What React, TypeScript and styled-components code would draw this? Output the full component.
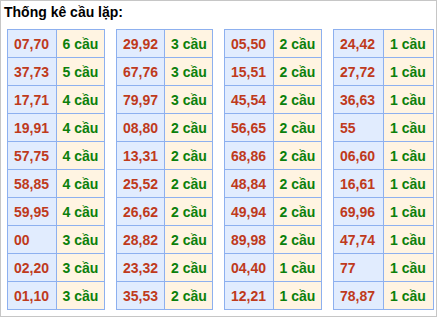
import React from 'react';
import styled, { createGlobalStyle } from 'styled-components';

const GlobalStyle = createGlobalStyle`
  html, body {
    margin: 0;
    padding: 0;
    background: #ffffff;
  }
  body {
    font-family: "Liberation Sans", Arial, sans-serif;
  }
`;

// [number pair, count] for each table column
const TABLES: [string, number][][] = [
  [['07,70', 6], ['37,73', 5], ['17,71', 4], ['19,91', 4], ['57,75', 4], ['58,85', 4], ['59,95', 4], ['00', 3], ['02,20', 3], ['01,10', 3]],
  [['29,92', 3], ['67,76', 3], ['79,97', 3], ['08,80', 2], ['13,31', 2], ['25,52', 2], ['26,62', 2], ['28,82', 2], ['23,32', 2], ['35,53', 2]],
  [['05,50', 2], ['15,51', 2], ['45,54', 2], ['56,65', 2], ['68,86', 2], ['48,84', 2], ['49,94', 2], ['89,98', 2], ['04,40', 1], ['12,21', 1]],
  [['24,42', 1], ['27,72', 1], ['36,63', 1], ['55', 1], ['06,60', 1], ['16,61', 1], ['69,96', 1], ['47,74', 1], ['77', 1], ['78,87', 1]],
];

const TABLE_WIDTHS = [98, 97, 98, 101];

const Frame = styled.div`
  box-sizing: border-box;
  width: 437px;
  height: 317px;
  border: 1px solid #c6c6c6;
  padding: 0 2px 0 6px;
`;

const Title = styled.div`
  font-size: 14px;
  font-weight: bold;
  color: #000;
  line-height: 17px;
  padding-top: 3px;
  margin-left: -3px;
  height: 25px;
`;

const TablesRow = styled.div`
  display: flex;
  gap: 11px;
`;

const Table = styled.div<{ $width: number }>`
  width: ${p => p.$width}px;
  box-sizing: border-box;
  display: grid;
  grid-template-columns: 1fr 1fr;
  grid-auto-rows: 27px;
  gap: 1px;
  padding: 1px;
  background: #8db0ef;
`;

const Cell = styled.div<{ $kind: 'num' | 'count' }>`
  background: ${p => (p.$kind === 'num' ? '#e1ecfe' : '#fff4e2')};
  color: ${p => (p.$kind === 'num' ? '#bf3a1c' : '#0b800b')};
  font-size: 14px;
  font-weight: bold;
  display: flex;
  align-items: center;
  padding-left: ${p => (p.$kind === 'num' ? 6 : 6)}px;
`;

export default function App() {
  return (
    <>
      <GlobalStyle />
      <Frame>
        <Title>Thống kê cầu lặp:</Title>
        <TablesRow>
          {TABLES.map((rows, i) => (
            <Table key={i} $width={TABLE_WIDTHS[i]}>
              {rows.map(([pair, count]) => (
                <React.Fragment key={pair}>
                  <Cell $kind="num">{pair}</Cell>
                  <Cell $kind="count">{count} cầu</Cell>
                </React.Fragment>
              ))}
            </Table>
          ))}
        </TablesRow>
      </Frame>
    </>
  );
}
